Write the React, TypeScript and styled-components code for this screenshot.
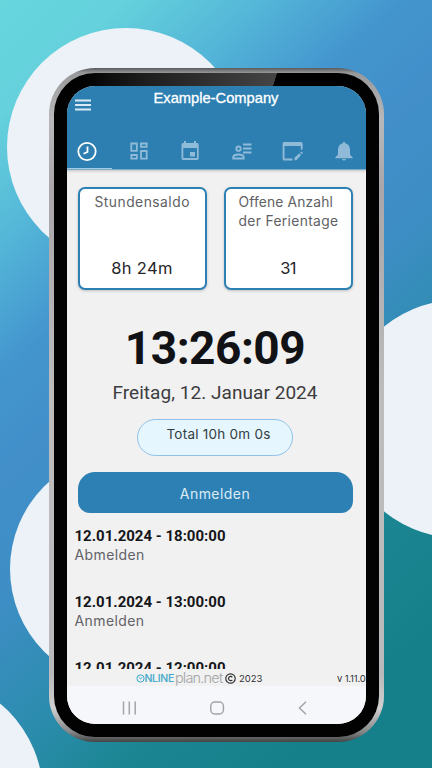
import React from "react";
import styled, { createGlobalStyle } from "styled-components";

const Global = createGlobalStyle`
  * { box-sizing: border-box; }
  body { margin: 0; overflow: hidden; }
`;

const Stage = styled.main`
  position: relative;
  width: 432px;
  height: 768px;
  overflow: hidden;
  display: flex;
  justify-content: center;
  align-items: flex-start;
  padding-top: 68px;
  background: linear-gradient(137deg, #67d6dd 0%, #64d1dc 10%, #54b6d8 21%, #4395ce 32%, #428fca 41%, #3d8ec4 52%, #2b8cad 65%, #1b8692 75%, #16808a 88%, #16808a 100%);
`;

const Bubble = styled.i<{ $x: number; $y: number; $r: number }>`
  position: absolute;
  left: ${(p) => p.$x - p.$r}px;
  top: ${(p) => p.$y - p.$r}px;
  width: ${(p) => p.$r * 2}px;
  height: ${(p) => p.$r * 2}px;
  border-radius: 50%;
  background: #ecf2f7;
`;

const Phone = styled.div`
  position: relative;
  width: 335px;
  height: 674px;
  padding: 5px;
  border-radius: 46px;
  background: linear-gradient(180deg, #58595b 0, #98999b 5px, #b8b8ba 50px, #aaa6a9 120px, #bdbdbe 50%, #b9b9bb 90%, #d0d0d1 640px, #858688 664px, #444 674px);
`;

const Bezel = styled.div`
  height: 100%;
  padding: 13px;
  border-radius: 41px;
  background: linear-gradient(107deg, transparent 213px, #000 213.6px) 0 0 / 100% 14px no-repeat,
    linear-gradient(90deg, #020202 30px, #1d1d1d 90px, #464646 226px) 0 0 / 100% 14px no-repeat, #020202;
`;

const Screen = styled.div`
  display: flex;
  flex-direction: column;
  height: 638px;
  border-radius: 28px;
  overflow: hidden;
  background: #f1f1f1;
`;

const Header = styled.header`
  flex: none;
  height: 84px;
  display: flex;
  flex-direction: column;
  background: #2d7fb2;
  border-bottom: 1px solid #78abca;
  box-shadow: 0 1px 3px #0003;
`;

const TitleBar = styled.div`
  display: grid;
  grid-template-columns: 32px 1fr 32px;
  height: 46px;
  padding-top: 4px;
`;

const Menu = styled.svg`
  width: 16px;
  height: 12px;
  margin: 9px 0 0 8px;
`;

const Title = styled.h1`
  margin: 0;
  text-align: center;
  color: #fff;
  font: 400 14.7px/16px "Liberation Sans", Arial, sans-serif;
  -webkit-text-stroke: 0.3px #fff;
`;

const Tabs = styled.nav`
  flex: 1;
  display: grid;
  grid-template-columns: 41px 62px 41px 62px 40px 63px;
  align-items: start;
`;

const Tab = styled.button<{ $active?: boolean }>`
  display: flex;
  justify-content: center;
  height: 36px;
  padding: 9px 0 0;
  border: 0;
  background: none;
  color: ${(p) => (p.$active ? "#fff" : "#8fbbd8")};
  svg { display: block; overflow: visible; }
`;

const Indicator = styled.div`
  width: 45px;
  height: 1px;
  flex: none;
  background: #a4cae2;
`;

const Content = styled.section`
  flex: none;
  height: 499px;
  padding: 17px 0 0;
  display: flex;
  flex-direction: column;
  overflow: hidden;
`;

const Cards = styled.div`
  flex: none;
  display: flex;
  justify-content: space-between;
  padding: 0 13px 0 11px;
`;

const Card = styled.article<{ $indent: number }>`
  display: flex;
  flex-direction: column;
  justify-content: space-between;
  width: 129px;
  height: 103px;
  padding: 4px 0 10px;
  border: 2px solid #2d80b3;
  border-radius: 7px;
  background: #fff;
  box-shadow: 0 1px 3px #0003;
  h2 {
    margin: 0 0 0 ${(p) => p.$indent}px;
    color: #606164;
    font: 400 13.8px/19px Inter, sans-serif;
    white-space: pre;
  }
`;

const Value = styled.strong<{ $spacing?: number }>`
  color: #242528;
  text-align: center;
  font: 400 16.5px/20px Inter, sans-serif;
  letter-spacing: ${(p) => p.$spacing ?? 0}px;
`;

const Line = styled.span<{ $spacing: number }>`
  display: block;
  letter-spacing: ${(p) => p.$spacing}px;
`;

const Clock = styled.time`
  flex: none;
  margin-top: 30px;
  padding-right: 2px;
  text-align: center;
  color: #111215;
  font: 700 46px/56px Roboto, sans-serif;
  letter-spacing: -0.5px;
`;

const Day = styled.div`
  flex: none;
  margin-top: 5px;
  padding-right: 2px;
  text-align: center;
  color: #3c3c3e;
  font: 400 19px/24px Roboto, sans-serif;
  letter-spacing: 0.05px;
`;

const Total = styled.div`
  flex: none;
  align-self: center;
  width: 156px;
  height: 37px;
  margin: 14px 3px 0 0;
  padding: 5px 0 0 8px;
  border: 1px solid #91c1e6;
  border-radius: 19px;
  background: #e5f6ff;
  color: #343d43;
  text-align: center;
  font: 400 13.5px/19px Inter, sans-serif;
  letter-spacing: 0.25px;
`;

const Login = styled.button`
  flex: none;
  width: 275px;
  height: 41px;
  margin: 16px 0 0 11px;
  padding: 3px 0 0;
  border: 0;
  border-radius: 17px 17px 12px 12px;
  background: #2d80b3;
  color: #dcecf7;
  font: 400 14px/18px Inter, sans-serif;
  letter-spacing: 0.45px;
`;

const Entries = styled.ol`
  list-style: none;
  margin: 13px 0 0;
  padding: 0 0 0 8px;
`;

const Entry = styled.li`
  height: 66px;
  color: #626268;
  font: 400 14px/18px Inter, sans-serif;
  letter-spacing: 0.4px;
  b {
    display: block;
    color: #15161a;
    font: 700 15px/20px Roboto, sans-serif;
    letter-spacing: 0;
  }
`;

const Footer = styled.footer`
  flex: none;
  height: 17px;
  display: flex;
  align-items: center;
  padding: 1px 0 0 69px;
  color: #303134;
  font: 400 9.5px/13px Inter, sans-serif;
  white-space: nowrap;
`;

const Logo = styled.span`
  display: flex;
  align-items: center;
  gap: 1px;
  color: #38a7c9;
  font: 400 10.5px/13px Inter, sans-serif;
`;

const LogoHead = styled.span`
  display: flex;
  align-items: center;
  letter-spacing: -0.3px;
  -webkit-text-stroke: 0.2px #38a7c9;
`;

const LogoTail = styled.span`
  width: 47px;
  color: #a3a5a7;
  font: 300 14.5px/15px Inter, sans-serif;
  letter-spacing: -0.8px;
  margin-top: -2px;
`;

const Copy = styled.span`
  display: flex;
  align-items: center;
  gap: 3px;
  margin-left: 3px;
`;

const Version = styled.span`
  margin-left: auto;
  letter-spacing: -0.2px;
`;

const SystemNav = styled.nav`
  flex: 1;
  display: flex;
  justify-content: space-between;
  align-items: flex-start;
  padding: 15px 59px 0 55px;
  background: #f6f7fb;
  color: #a3a4a7;
`;

export default function App() {
  return (
    <Stage>
      <Global />
      <Bubble $x={126} $y={147} $r={119} />
      <Bubble $x={127} $y={569} $r={117} />
      <Bubble $x={459} $y={419} $r={119} />
      <Bubble $x={-76} $y={795} $r={119} />
      <Phone>
        <Bezel>
          <Screen>
            <Header>
              <TitleBar>
                <Menu viewBox="0 0 16 12" stroke="#d8e9f4" strokeWidth="2">
                  <path d="M0 1.5H16M0 6H16M0 10.5H16" />
                </Menu>
                <Title>Example-Company</Title>
              </TitleBar>
              <Tabs>
                <Tab $active>
                  <svg width="20" height="20" viewBox="0 0 20 20" fill="none" stroke="currentColor" strokeWidth="1.8">
                    <circle cx="10" cy="10.5" r="8.7" />
                    <path d="M10.5 5.5V11L6.5 12.8" />
                  </svg>
                </Tab>
                <Tab>
                  <svg width="18" height="20" viewBox="0 0 18 20" fill="none" stroke="currentColor" strokeWidth="1.8">
                    <path d="M1.3 2.5H6.8V9.8H1.3ZM11 2.5H16.7V5.8H11ZM1.3 14H6.8V17.7H1.3ZM11 10H16.7V17.7H11Z" />
                  </svg>
                </Tab>
                <Tab>
                  <svg width="18" height="20" viewBox="0 0 18 20" fill="currentColor">
                    <path fillRule="evenodd" d="M3 0H5V2H13V0H15V2H16Q17.7 2 17.7 4V17Q17.7 19 16 19H2Q.5 19 .5 17V4Q.5 2 2 2H3ZM2.3 7V17H16V7ZM9 11H14V15.5H9Z" />
                  </svg>
                </Tab>
                <Tab>
                  <svg width="20" height="20" viewBox="0 0 20 20" fill="none" stroke="currentColor" strokeWidth="1.8">
                    <circle cx="6.5" cy="7.7" r="2.2" />
                    <path d="M1.2 17.5V16Q1.7 13.5 6.5 13.5T11.7 16V17.5ZM11 3.5H19.5M11 7.5H19.5M11 11.5H19.5" />
                  </svg>
                </Tab>
                <Tab>
                  <svg width="21" height="20" viewBox="0 0 21 20" fill="currentColor">
                    <path d="M2 1H19Q20.7 1 20.7 3V8L18.8 9V5H2.5V17.5H10.5V19.4H2Q.6 19.4 .6 17.4V3Q.6 1 2 1Z" />
                    <path d="M12.5 16.8L17.4 12.3L19 14.2L14.4 19.3H12.5ZM18.2 11.5L19.3 10.5L21 12L19.8 13.3Z" />
                  </svg>
                </Tab>
                <Tab>
                  <svg width="18" height="20" viewBox="0 0 18 20" fill="currentColor">
                    <path d="M7.8 2.2Q7.8.7 9 .7T10.2 2.2Q14.5 3.4 15 8V13Q15 14.6 17.5 16V17.2H.5V16Q3 14.6 3 13V8Q3.5 3.4 7.8 2.2ZM7 18H11Q10.5 19.5 9 19.5T7 18Z" />
                  </svg>
                </Tab>
              </Tabs>
              <Indicator />
            </Header>
            <Content>
              <Cards>
                <Card $indent={15}>
                  <h2><Line $spacing={0.5}>Stundensaldo</Line></h2>
                  <Value $spacing={0.3}>8h 24m</Value>
                </Card>
                <Card $indent={13}>
                  <h2><Line $spacing={0.15}>Offene Anzahl</Line><Line $spacing={0.35}>der Ferientage</Line></h2>
                  <Value $spacing={-0.8}>31</Value>
                </Card>
              </Cards>
              <Clock>13:26:09</Clock>
              <Day>Freitag, 12. Januar 2024</Day>
              <Total>Total 10h 0m 0s</Total>
              <Login>Anmelden</Login>
              <Entries>
                <Entry><b>12.01.2024 - 18:00:00</b>Abmelden</Entry>
                <Entry><b>12.01.2024 - 13:00:00</b>Anmelden</Entry>
                <Entry><b>12.01.2024 - 12:00:00</b></Entry>
              </Entries>
            </Content>
            <Footer>
              <Logo>
                <LogoHead>
                  <svg width="9" height="9" viewBox="0 0 9 9" fill="none" stroke="currentColor">
                    <circle cx="4.5" cy="4.5" r="3.6" /><path d="M2.8 3.2L4.5 4.8L6.2 3.5" />
                  </svg>
                  NLINE
                </LogoHead>
                <LogoTail>plan.net</LogoTail>
              </Logo>
              <Copy>
                <svg width="11" height="11" viewBox="0 0 11 11" fill="none" stroke="currentColor" strokeWidth="1.2">
                  <circle cx="5.5" cy="5.5" r="4.7" /><path d="M7.3 4.3A2.1 2.1 0 1 0 7.3 6.8" />
                </svg>
                2023
              </Copy>
              <Version>v 1.11.0</Version>
            </Footer>
            <SystemNav>
              <svg width="15" height="14" viewBox="0 0 15 14" stroke="currentColor" strokeWidth="1.5"><path d="M1.5 .5V13.5M7.3 .5V13.5M13.2 .5V13.5" /></svg>
              <svg width="15" height="14" viewBox="0 0 15 14" fill="none" stroke="currentColor" strokeWidth="1.5"><rect x="0.8" y="1" width="12.6" height="12" rx="4" /></svg>
              <svg width="9" height="14" viewBox="0 0 9 14" fill="none" stroke="currentColor" strokeWidth="1.5"><path d="M8 .7L1.5 7L8 13.3" /></svg>
            </SystemNav>
          </Screen>
        </Bezel>
      </Phone>
    </Stage>
  );
}
